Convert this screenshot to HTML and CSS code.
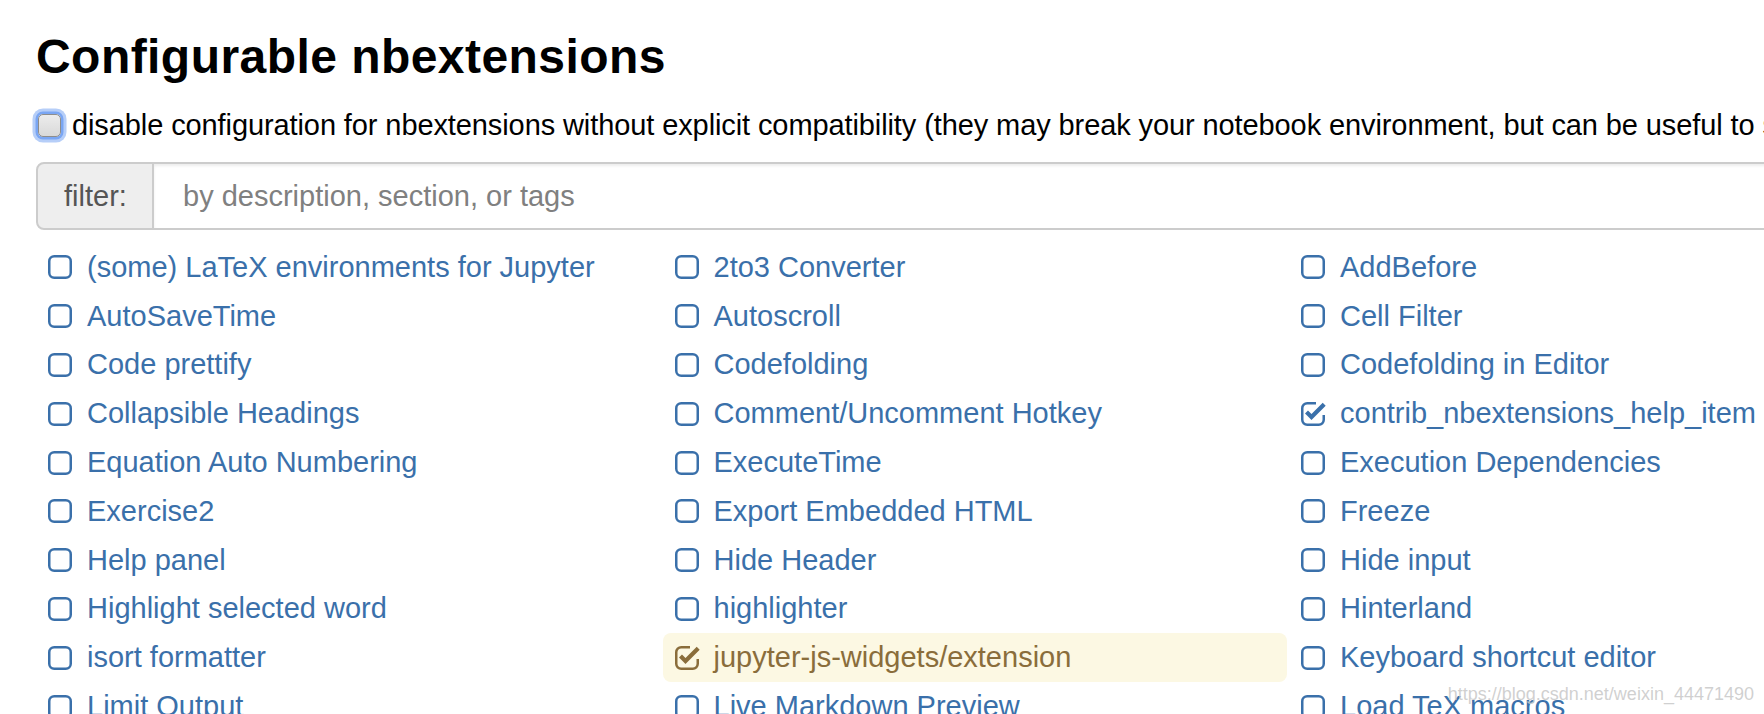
FILE: index.html
```html
<!DOCTYPE html>
<html lang="en">
<head>
<meta charset="utf-8">
<title>Configurable nbextensions</title>
<link rel="stylesheet" href="styles.css">
</head>
<body>
<div class="page">
  <h1 class="title">Configurable nbextensions</h1>
  <label class="compat">
    <span class="native-box"></span>
    <span class="compat-text">disable configuration for nbextensions without explicit compatibility (they may break your notebook environment, but can be useful to show for nbextension development)</span>
  </label>
  <div class="filter">
    <span class="filter-addon">filter:</span>
    <span class="filter-input">by description, section, or tags</span>
  </div>
  <div class="ext-grid">
    <ul class="ext-col">
      <li class="ext"><svg class="ico" viewBox="0 0 24 24"><rect x="1.25" y="1.25" width="21.5" height="21.5" rx="5"/></svg><span>(some) LaTeX environments for Jupyter</span></li>
      <li class="ext"><svg class="ico" viewBox="0 0 24 24"><rect x="1.25" y="1.25" width="21.5" height="21.5" rx="5"/></svg><span>AutoSaveTime</span></li>
      <li class="ext"><svg class="ico" viewBox="0 0 24 24"><rect x="1.25" y="1.25" width="21.5" height="21.5" rx="5"/></svg><span>Code prettify</span></li>
      <li class="ext"><svg class="ico" viewBox="0 0 24 24"><rect x="1.25" y="1.25" width="21.5" height="21.5" rx="5"/></svg><span>Collapsible Headings</span></li>
      <li class="ext"><svg class="ico" viewBox="0 0 24 24"><rect x="1.25" y="1.25" width="21.5" height="21.5" rx="5"/></svg><span>Equation Auto Numbering</span></li>
      <li class="ext"><svg class="ico" viewBox="0 0 24 24"><rect x="1.25" y="1.25" width="21.5" height="21.5" rx="5"/></svg><span>Exercise2</span></li>
      <li class="ext"><svg class="ico" viewBox="0 0 24 24"><rect x="1.25" y="1.25" width="21.5" height="21.5" rx="5"/></svg><span>Help panel</span></li>
      <li class="ext"><svg class="ico" viewBox="0 0 24 24"><rect x="1.25" y="1.25" width="21.5" height="21.5" rx="5"/></svg><span>Highlight selected word</span></li>
      <li class="ext"><svg class="ico" viewBox="0 0 24 24"><rect x="1.25" y="1.25" width="21.5" height="21.5" rx="5"/></svg><span>isort formatter</span></li>
      <li class="ext"><svg class="ico" viewBox="0 0 24 24"><rect x="1.25" y="1.25" width="21.5" height="21.5" rx="5"/></svg><span>Limit Output</span></li>
    </ul>
    <ul class="ext-col">
      <li class="ext"><svg class="ico" viewBox="0 0 24 24"><rect x="1.25" y="1.25" width="21.5" height="21.5" rx="5"/></svg><span>2to3 Converter</span></li>
      <li class="ext"><svg class="ico" viewBox="0 0 24 24"><rect x="1.25" y="1.25" width="21.5" height="21.5" rx="5"/></svg><span>Autoscroll</span></li>
      <li class="ext"><svg class="ico" viewBox="0 0 24 24"><rect x="1.25" y="1.25" width="21.5" height="21.5" rx="5"/></svg><span>Codefolding</span></li>
      <li class="ext"><svg class="ico" viewBox="0 0 24 24"><rect x="1.25" y="1.25" width="21.5" height="21.5" rx="5"/></svg><span>Comment/Uncomment Hotkey</span></li>
      <li class="ext"><svg class="ico" viewBox="0 0 24 24"><rect x="1.25" y="1.25" width="21.5" height="21.5" rx="5"/></svg><span>ExecuteTime</span></li>
      <li class="ext"><svg class="ico" viewBox="0 0 24 24"><rect x="1.25" y="1.25" width="21.5" height="21.5" rx="5"/></svg><span>Export Embedded HTML</span></li>
      <li class="ext"><svg class="ico" viewBox="0 0 24 24"><rect x="1.25" y="1.25" width="21.5" height="21.5" rx="5"/></svg><span>Hide Header</span></li>
      <li class="ext"><svg class="ico" viewBox="0 0 24 24"><rect x="1.25" y="1.25" width="21.5" height="21.5" rx="5"/></svg><span>highlighter</span></li>
      <li class="ext ext-selected"><svg class="ico" viewBox="0 0 24 24"><path class="box" d="M15 1.25 H6.25 A5 5 0 0 0 1.25 6.25 V17.75 A5 5 0 0 0 6.25 22.75 H17.75 A5 5 0 0 0 22.75 17.75 V13"/><path class="tick" d="M5.5 10 L10.5 15 L23.2 2.3"/></svg><span>jupyter-js-widgets/extension</span></li>
      <li class="ext"><svg class="ico" viewBox="0 0 24 24"><rect x="1.25" y="1.25" width="21.5" height="21.5" rx="5"/></svg><span>Live Markdown Preview</span></li>
    </ul>
    <ul class="ext-col">
      <li class="ext"><svg class="ico" viewBox="0 0 24 24"><rect x="1.25" y="1.25" width="21.5" height="21.5" rx="5"/></svg><span>AddBefore</span></li>
      <li class="ext"><svg class="ico" viewBox="0 0 24 24"><rect x="1.25" y="1.25" width="21.5" height="21.5" rx="5"/></svg><span>Cell Filter</span></li>
      <li class="ext"><svg class="ico" viewBox="0 0 24 24"><rect x="1.25" y="1.25" width="21.5" height="21.5" rx="5"/></svg><span>Codefolding in Editor</span></li>
      <li class="ext"><svg class="ico" viewBox="0 0 24 24"><path class="box" d="M15 1.25 H6.25 A5 5 0 0 0 1.25 6.25 V17.75 A5 5 0 0 0 6.25 22.75 H17.75 A5 5 0 0 0 22.75 17.75 V13"/><path class="tick" d="M5.5 10 L10.5 15 L23.2 2.3"/></svg><span>contrib_nbextensions_help_item</span></li>
      <li class="ext"><svg class="ico" viewBox="0 0 24 24"><rect x="1.25" y="1.25" width="21.5" height="21.5" rx="5"/></svg><span>Execution Dependencies</span></li>
      <li class="ext"><svg class="ico" viewBox="0 0 24 24"><rect x="1.25" y="1.25" width="21.5" height="21.5" rx="5"/></svg><span>Freeze</span></li>
      <li class="ext"><svg class="ico" viewBox="0 0 24 24"><rect x="1.25" y="1.25" width="21.5" height="21.5" rx="5"/></svg><span>Hide input</span></li>
      <li class="ext"><svg class="ico" viewBox="0 0 24 24"><rect x="1.25" y="1.25" width="21.5" height="21.5" rx="5"/></svg><span>Hinterland</span></li>
      <li class="ext"><svg class="ico" viewBox="0 0 24 24"><rect x="1.25" y="1.25" width="21.5" height="21.5" rx="5"/></svg><span>Keyboard shortcut editor</span></li>
      <li class="ext"><svg class="ico" viewBox="0 0 24 24"><rect x="1.25" y="1.25" width="21.5" height="21.5" rx="5"/></svg><span>Load TeX macros</span></li>
    </ul>
  </div>
</div>
<div class="watermark">https://blog.csdn.net/weixin_44471490</div>
</body>
</html>
```

FILE: styles.css
```css
html, body {
  margin: 0;
  padding: 0;
  overflow: hidden;
  background: #ffffff;
}

body {
  font-family: "Liberation Sans", Arial, Helvetica, sans-serif;
  color: #000000;
  position: relative;
  width: 1764px;
  height: 714px;
}

.page {
  width: 1884px;
  padding: 30px 0 0 36px;
}

.title {
  margin: 0;
  font-size: 48px;
  font-weight: bold;
  line-height: 53px;
  letter-spacing: 0.45px;
}

.compat {
  display: flex;
  align-items: center;
  height: 40px;
  margin-top: 22px;
  white-space: nowrap;
}

.native-box {
  flex: none;
  width: 21px;
  height: 21px;
  margin-left: 2px;
  border: 1.5px solid #8d8d8d;
  border-radius: 5px;
  background: linear-gradient(#ececec, #d9d9d9);
  box-shadow: 0 0 0 2.5px #7aa6f3, 0 0 0 5.5px rgba(122, 166, 243, 0.55);
}

.compat-text {
  margin-left: 11px;
  font-size: 29px;
  letter-spacing: -0.1px;
}

.filter {
  display: flex;
  height: 68px;
  margin-top: 17px;
  font-size: 29px;
}

.filter-addon {
  flex: none;
  box-sizing: border-box;
  width: 118px;
  display: flex;
  align-items: center;
  padding-left: 26px;
  background: #eeeeee;
  color: #555555;
  border: 2px solid #cccccc;
  border-radius: 8px 0 0 8px;
}

.filter-input {
  flex: 1;
  display: flex;
  align-items: center;
  padding-left: 29px;
  color: #808080;
  border: 2px solid #cccccc;
  border-left: none;
  box-shadow: inset 0 2px 3px rgba(0, 0, 0, 0.075);
}

.ext-grid {
  display: grid;
  grid-template-columns: repeat(3, 626.5px);
  margin-top: 13px;
}

.ext-col {
  list-style: none;
  margin: 0;
  padding: 0;
}

.ext {
  display: flex;
  align-items: center;
  height: 48.8px;
  margin-right: 2px;
  padding-left: 12px;
  font-size: 29px;
  color: #3a70aa;
  border-radius: 8px;
  white-space: nowrap;
}

.ico {
  flex: none;
  width: 24px;
  height: 24px;
  margin-right: 15px;
  overflow: visible;
  fill: none;
  stroke: currentColor;
  stroke-width: 2.5;
}

.ico .tick {
  stroke-width: 4.2;
  stroke-linecap: butt;
  stroke-linejoin: miter;
}

.ext-selected {
  background: #fcf8e3;
  color: #8a6d3b;
}

.watermark {
  position: absolute;
  right: 10px;
  top: 684px;
  font-size: 18px;
  color: rgba(200, 200, 200, 0.85);
  white-space: nowrap;
}
```
